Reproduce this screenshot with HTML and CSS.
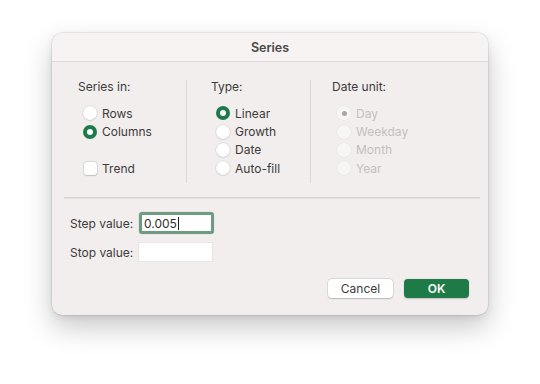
FILE: index.html
```html
<!DOCTYPE html>
<html>
<head>
<meta charset="utf-8">
<link rel="stylesheet" href="styles.css">
</head>
<body>
<div class="dialog">
  <div class="titlebar">Series</div>
  <div class="groups">
    <div class="group g1">
      <div class="head">Series in:</div>
      <div class="opt"><span class="radio"></span>Rows</div>
      <div class="opt"><span class="radio on"></span>Columns</div>
      <div class="opt spaced"><span class="check"></span>Trend</div>
    </div>
    <div class="vline"></div>
    <div class="group g2">
      <div class="head">Type:</div>
      <div class="opt"><span class="radio on"></span>Linear</div>
      <div class="opt"><span class="radio"></span>Growth</div>
      <div class="opt"><span class="radio"></span>Date</div>
      <div class="opt"><span class="radio"></span>Auto-fill</div>
    </div>
    <div class="vline"></div>
    <div class="group g3">
      <div class="head">Date unit:</div>
      <div class="opt dis"><span class="radio dot"></span>Day</div>
      <div class="opt dis"><span class="radio"></span>Weekday</div>
      <div class="opt dis"><span class="radio"></span>Month</div>
      <div class="opt dis"><span class="radio"></span>Year</div>
    </div>
  </div>
  <div class="hline"></div>
  <div class="fields">
    <div class="field"><span class="flabel">Step value:</span><span class="input focus">0.005<span class="caret"></span></span></div>
    <div class="field"><span class="flabel">Stop value:</span><span class="input"></span></div>
  </div>
  <div class="buttons">
    <button class="btn cancel">Cancel</button>
    <button class="btn ok">OK</button>
  </div>
</div>
</body>
</html>
```
FILE: styles.css
```css
html, body {
  margin: 0;
  background: #ffffff;
}
body {
  width: 540px;
  height: 384px;
  overflow: hidden;
  font-family: Inter, "Noto Sans", sans-serif;
  font-size: 12px;
  color: #3d3b3b;
}
.dialog {
  margin: 33px 0 0 52px;
  width: 436px;
  height: 282px;
  background: #f1eeed;
  border-radius: 10px;
  box-shadow: 0 0 0 0.5px rgba(0,0,0,0.12), 0 12px 28px rgba(0,0,0,0.22), 0 2px 6px rgba(0,0,0,0.08);
  display: flex;
  flex-direction: column;
  overflow: hidden;
}
.titlebar {
  height: 28px;
  background: #f6f3f2;
  border-bottom: 1px solid #dedad9;
  display: flex;
  align-items: center;
  justify-content: center;
  font-weight: 600;
  font-size: 12.5px;
  color: #4a4848;
}
.groups {
  display: flex;
  height: 135px;
}
.group {
  display: flex;
  flex-direction: column;
  padding-top: 17px;
}
.g1 { width: 134px; padding-left: 26px; box-sizing: border-box; }
.g2 { width: 123px; padding-left: 24px; box-sizing: border-box; }
.g3 { padding-left: 21px; }
.vline {
  width: 1px;
  margin-top: 18px;
  height: 103px;
  background: #dcd8d7;
}
.head {
  height: 16px;
  line-height: 16px;
  margin-bottom: 9px;
}
.opt {
  display: flex;
  align-items: center;
  height: 18.4px;
  gap: 5px;
  margin-left: 5px;
}
.opt.spaced { margin-top: 18.4px; }
.dis { color: #c3bfbe; }
.radio {
  width: 14px;
  height: 14px;
  box-sizing: border-box;
  border-radius: 50%;
  background: #ffffff;
  box-shadow: 0 0 0 0.5px rgba(0,0,0,0.1), 0 0.5px 1.5px rgba(0,0,0,0.15);
  display: inline-flex;
  align-items: center;
  justify-content: center;
}
.radio.on {
  background: #1f7a4b;
  box-shadow: none;
}
.radio.on::after {
  content: "";
  width: 6px;
  height: 6px;
  border-radius: 50%;
  background: #ffffff;
}
.dis .radio {
  background: #f7f5f5;
  box-shadow: 0 0 0 0.5px rgba(0,0,0,0.05);
}
.radio.dot::after {
  content: "";
  width: 5px;
  height: 5px;
  border-radius: 50%;
  background: #a9a6a5;
}
.check {
  width: 13px;
  height: 13px;
  border-radius: 3px;
  background: #ffffff;
  box-shadow: 0 0 0 0.5px rgba(0,0,0,0.12), 0 0.5px 1.5px rgba(0,0,0,0.15);
  margin-left: 1px;
}
.hline {
  height: 2px;
  margin: 0 8px 0 12px;
  background: #e3dfde;
  border-top: 1px solid #d9d5d4;
  box-sizing: border-box;
}
.fields {
  display: flex;
  flex-direction: column;
  padding: 14px 0 0 18px;
  gap: 9px;
}
.field {
  display: flex;
  align-items: center;
  height: 20px;
}
.flabel {
  width: 69px;
}
.input {
  width: 73px;
  height: 18px;
  box-sizing: border-box;
  background: #ffffff;
  box-shadow: 0 0 0 0.5px rgba(0,0,0,0.08);
  display: inline-flex;
  align-items: center;
  padding-left: 4px;
  color: #2f2e2e;
}
.input.focus {
  width: 75px;
  height: 22px;
  border: 3px solid #6f9c80;
  border-radius: 3px;
  padding-left: 2px;
}
.caret {
  width: 1px;
  height: 13px;
  background: #222;
  margin-left: 1px;
}
.buttons {
  display: flex;
  justify-content: flex-end;
  gap: 11px;
  padding: 17px 19px 0 0;
}
.btn {
  width: 65px;
  height: 19px;
  border: none;
  border-radius: 4px;
  font-family: Inter, "Noto Sans", sans-serif;
  font-size: 12px;
  padding: 0;
}
.cancel {
  background: #ffffff;
  color: #3d3b3b;
  box-shadow: 0 0 0 0.5px rgba(0,0,0,0.12), 0 0.5px 1.5px rgba(0,0,0,0.18);
}
.ok {
  background: #1e7a46;
  color: #ffffff;
  font-weight: 600;
  box-shadow: 0 0.5px 1.5px rgba(0,0,0,0.2);
}
```
